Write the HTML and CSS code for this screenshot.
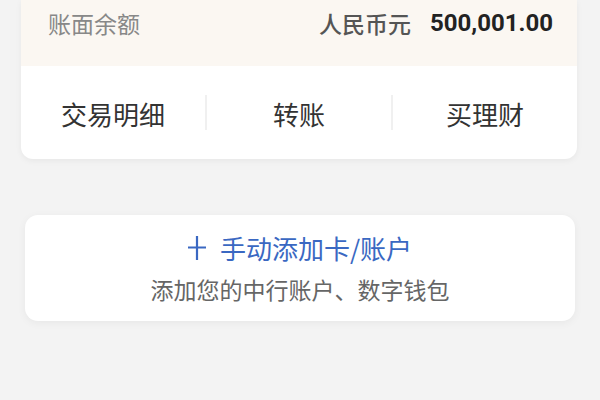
FILE: index.html
```html
<!DOCTYPE html>
<html lang="zh-CN">
<head>
<meta charset="utf-8">
<link rel="stylesheet" href="styles.css">
</head>
<body>
<div class="page">
  <section class="account-card">
    <div class="balance">
      <span class="balance-label">账面余额</span>
      <span class="balance-value">
        <span class="currency">人民币元</span>
        <span class="amount">500,001.00</span>
      </span>
    </div>
    <div class="actions">
      <div class="action">交易明细</div>
      <div class="divider"></div>
      <div class="action">转账</div>
      <div class="divider"></div>
      <div class="action">买理财</div>
    </div>
  </section>

  <section class="add-card">
    <div class="add-title">
      <svg class="plus" width="18" height="24" viewBox="0 0 18 24"><path d="M0 11.5H18M9 0V24" stroke="#3a68c2" stroke-width="2.2" fill="none"/></svg>
      <span>手动添加卡/账户</span>
    </div>
    <div class="add-sub">添加您的中行账户、数字钱包</div>
  </section>
</div>
</body>
</html>
```

FILE: styles.css
```css
html, body {
  margin: 0;
  padding: 0;
  background: #f3f3f3;
}
body {
  width: 600px;
  height: 400px;
  overflow: hidden;
  font-family: "Noto Sans CJK SC", "Noto Sans", sans-serif;
}
.page {
  display: flex;
  flex-direction: column;
}
.account-card {
  margin: 0 23px 0 21px;
  background: #fff;
  border-radius: 0 0 12px 12px;
  box-shadow: 0 2px 6px rgba(0, 0, 0, 0.05);
  overflow: hidden;
}
.balance {
  background: #fbf7f2;
  height: 66px;
  box-sizing: border-box;
  padding: 0 24px 19px 27px;
  display: flex;
  align-items: center;
  justify-content: space-between;
}
.balance-label {
  font-size: 23px;
  color: #888;
  line-height: 47px;
}
.balance-value {
  display: flex;
  align-items: center;
  gap: 19px;
}
.currency {
  font-size: 23px;
  color: #555;
  font-weight: 500;
  line-height: 47px;
}
.amount {
  font-family: Roboto, "Liberation Sans", sans-serif;
  font-weight: 700;
  font-size: 24px;
  color: #222;
  line-height: 47px;
}
.actions {
  display: flex;
  align-items: center;
  height: 93px;
  box-sizing: border-box;
  padding: 29px 0 29px;
}
.action {
  flex: 1;
  text-align: center;
  font-size: 26px;
  color: #333;
  line-height: 35px;
  padding-top: 2px;
}
.divider {
  width: 2px;
  height: 35px;
  background: #f0f0f0;
}
.add-card {
  margin: 56px 25px 0;
  height: 106px;
  box-sizing: border-box;
  background: #fff;
  border-radius: 13px;
  box-shadow: 0 2px 8px rgba(0, 0, 0, 0.05);
  display: flex;
  flex-direction: column;
  align-items: center;
  padding-top: 17px;
}
.add-title {
  display: flex;
  align-items: center;
  gap: 14px;
  height: 32px;
  font-size: 26px;
  color: #3a68c2;
  line-height: 32px;
}
.plus {
  display: block;
}
.add-sub {
  margin-top: 11px;
  font-size: 23px;
  color: #666;
  line-height: 28px;
}
```
